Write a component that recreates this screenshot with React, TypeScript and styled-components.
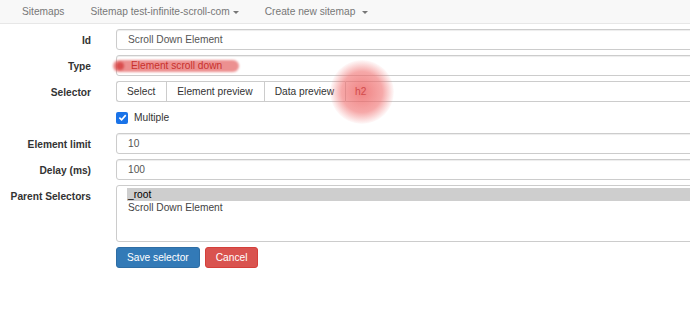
import React from "react";
import styled, { createGlobalStyle } from "styled-components";

const FS = "10.2px";

const Global = createGlobalStyle`
  html, body { margin: 0; padding: 0; background: #fff; overflow: hidden; }
  body { font-family: "Liberation Sans", Arial, sans-serif; font-size: ${FS}; color: #333; }
`;

const Navbar = styled.nav`
  height: 23px;
  background: #f8f8f8;
  border-bottom: 1px solid #e7e7e7;
  display: flex;
  align-items: center;
  padding-left: 22px;
  gap: 26px;
`;

const NavItem = styled.span`
  color: #777;
  font-size: ${FS};
  display: inline-flex;
  align-items: center;
  gap: 3px;
`;

const Caret = styled.span<{ $gap?: number }>`
  display: inline-block;
  width: 0;
  height: 0;
  border-left: 3px solid transparent;
  border-right: 3px solid transparent;
  border-top: 3px solid #777;
  margin-left: ${(p) => p.$gap ?? 0}px;
  margin-top: 1px;
`;

const Form = styled.form`
  width: 760px;
  display: grid;
  grid-template-columns: 91px 1fr;
  column-gap: 25px;
  row-gap: 5px;
  padding-top: 5px;
`;

const Label = styled.label<{ $top?: boolean }>`
  font-weight: bold;
  font-size: ${FS};
  color: #333;
  text-align: right;
  align-self: ${(p) => (p.$top ? "start" : "center")};
  padding-top: ${(p) => (p.$top ? "6px" : "1px")};
`;

const Input = styled.div`
  height: 21px;
  box-sizing: border-box;
  border: 1px solid #ccc;
  border-radius: 3px;
  box-shadow: inset 0 1px 1px rgba(0,0,0,0.075);
  padding: 0 11px;
  display: flex;
  align-items: center;
  font-size: ${FS};
  color: #555;
  position: relative;
`;

const Highlight = styled.span`
  position: absolute;
  left: -4px;
  top: 4px;
  width: 126px;
  height: 12px;
  border-radius: 6px;
  background: rgba(226, 84, 84, 0.65);
  filter: blur(1.2px);
`;

const Dot = styled.span`
  position: absolute;
  left: -1px;
  top: 6px;
  width: 8px;
  height: 8px;
  border-radius: 50%;
  background: rgba(210, 50, 50, 0.7);
  filter: blur(1px);
`;

const RedText = styled.span`
  position: relative;
  color: #c9302c;
  padding-left: 3px;
`;

const Group = styled.div`
  display: flex;
  height: 21px;
  position: relative;
`;

const GroupBtn = styled.span`
  box-sizing: border-box;
  border: 1px solid #ccc;
  border-right: none;
  background: #fff;
  color: #333;
  padding: 0 11px 0 10px;
  display: flex;
  align-items: center;
  font-size: ${FS};
  &:first-child { border-radius: 3px 0 0 3px; }
`;

const GroupInput = styled.span`
  flex: 1;
  box-sizing: border-box;
  border: 1px solid #ccc;
  border-radius: 0 3px 3px 0;
  padding: 0 9px;
  display: flex;
  align-items: center;
  font-size: ${FS};
  color: #d24b4b;
  position: relative;
`;

const Glow = styled.span`
  position: absolute;
  left: -16px;
  top: -22px;
  width: 64px;
  height: 64px;
  border-radius: 50%;
  background: radial-gradient(circle, rgba(235, 90, 90, 0.75) 0%, rgba(240, 110, 110, 0.6) 45%, rgba(245, 140, 140, 0) 72%);
  pointer-events: none;
`;

const GlowText = styled.span`
  position: relative;
`;

const CheckRow = styled.div`
  grid-column: 2;
  height: 21px;
  display: flex;
  align-items: center;
  gap: 6px;
  color: #333;
  font-size: ${FS};
`;

const Box = styled.span`
  width: 12px;
  height: 12px;
  border-radius: 2px;
  background: #1a73e8;
  display: inline-flex;
  align-items: center;
  justify-content: center;
`;

const SelectBox = styled.div`
  height: 57px;
  box-sizing: border-box;
  border: 1px solid #ccc;
  border-radius: 3px;
  padding: 2px 0 0 10px;
  font-size: ${FS};
  color: #333;
`;

const Option = styled.div<{ $sel?: boolean }>`
  height: 13px;
  line-height: 13px;
  padding-left: 1px;
  background: ${(p) => (p.$sel ? "#cecece" : "transparent")};
  color: ${(p) => (p.$sel ? "#000" : "#444")};
`;

const Actions = styled.div`
  grid-column: 2;
  display: flex;
  gap: 5px;
`;

const Button = styled.span<{ $variant: "primary" | "danger" }>`
  height: 21px;
  box-sizing: border-box;
  padding: 0 10px;
  border-radius: 3px;
  display: inline-flex;
  align-items: center;
  color: #fff;
  font-size: ${FS};
  background: ${(p) => (p.$variant === "primary" ? "#337ab7" : "#d9534f")};
  border: 1px solid ${(p) => (p.$variant === "primary" ? "#2e6da4" : "#d43f3a")};
`;

export default function App() {
  return (
    <>
      <Global />
      <Navbar>
        <NavItem>Sitemaps</NavItem>
        <NavItem>Sitemap test-infinite-scroll-com<Caret /></NavItem>
        <NavItem>Create new sitemap<Caret $gap={4} /></NavItem>
      </Navbar>
      <Form>
        <Label>Id</Label>
        <Input>Scroll Down Element</Input>

        <Label>Type</Label>
        <Input>
          <Highlight />
          <Dot />
          <RedText>Element scroll down</RedText>
        </Input>

        <Label>Selector</Label>
        <Group>
          <GroupBtn>Select</GroupBtn>
          <GroupBtn>Element preview</GroupBtn>
          <GroupBtn>Data preview</GroupBtn>
          <GroupInput>
            <Glow />
            <GlowText>h2</GlowText>
          </GroupInput>
        </Group>

        <CheckRow>
          <Box>
            <svg width="9" height="9" viewBox="0 0 10 10">
              <path d="M1.5 5.2 L4 7.6 L8.6 2.4" stroke="#fff" strokeWidth="1.8" fill="none" />
            </svg>
          </Box>
          Multiple
        </CheckRow>

        <Label>Element limit</Label>
        <Input>10</Input>

        <Label>Delay (ms)</Label>
        <Input>100</Input>

        <Label $top>Parent Selectors</Label>
        <SelectBox>
          <Option $sel>_root</Option>
          <Option>Scroll Down Element</Option>
        </SelectBox>

        <Actions>
          <Button $variant="primary">Save selector</Button>
          <Button $variant="danger">Cancel</Button>
        </Actions>
      </Form>
    </>
  );
}
